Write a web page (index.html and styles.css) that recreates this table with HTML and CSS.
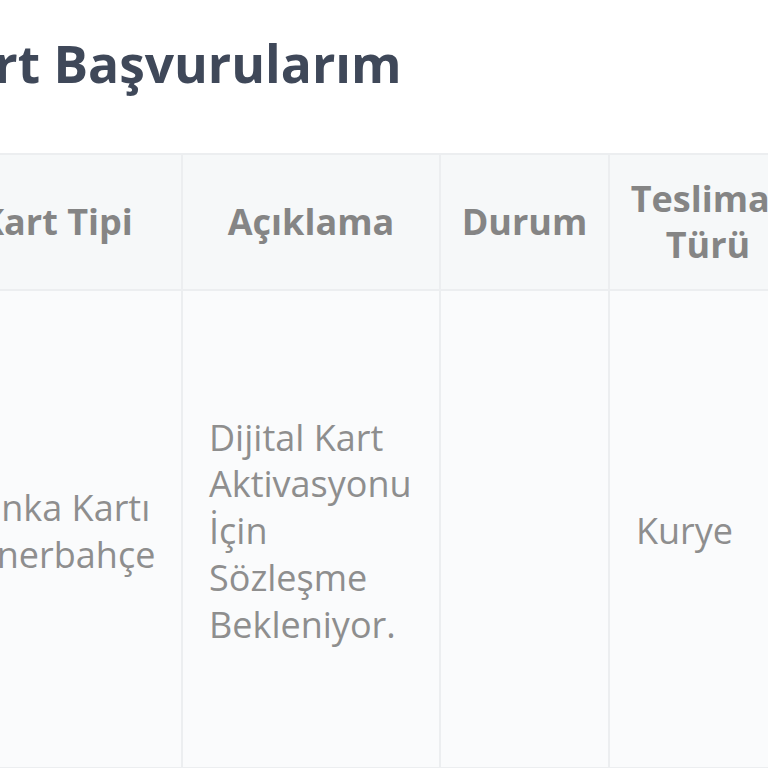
FILE: index.html
```html
<!DOCTYPE html>
<html lang="tr">
<head>
<meta charset="utf-8">
<title>Kart Başvurularım</title>
<link rel="stylesheet" href="styles.css">
</head>
<body>
<main class="page">
  <h1 class="title">Kart Başvurularım</h1>
  <table class="apps">
    <colgroup>
      <col class="c-type">
      <col class="c-desc">
      <col class="c-status">
      <col class="c-delivery">
    </colgroup>
    <thead>
      <tr>
        <th>Kart Tipi</th>
        <th>Açıklama</th>
        <th>Durum</th>
        <th>Teslimat Türü</th>
      </tr>
    </thead>
    <tbody>
      <tr>
        <td>Banka Kartı<br>Fenerbahçe</td>
        <td>Dijital Kart Aktivasyonu İçin Sözleşme Bekleniyor.</td>
        <td></td>
        <td>Kurye</td>
      </tr>
    </tbody>
  </table>
</main>
</body>
</html>
```

FILE: styles.css
```css
html, body {
  margin: 0;
  padding: 0;
  background: #ffffff;
  overflow: hidden;
}

.page {
  margin-left: -70px;
  width: 900px;
  font-family: "Open Sans", "Noto Sans", sans-serif;
}

.title {
  margin: 27px 0 54px -1px;
  font-size: 51.5px;
  line-height: 72px;
  font-weight: 700;
  color: #3f4859;
}

.apps {
  border-collapse: collapse;
  table-layout: fixed;
  width: 876px;
}

.c-type { width: 251px; }
.c-desc { width: 258px; }
.c-status { width: 169px; }
.c-delivery { width: 198px; }

.apps th,
.apps td {
  border: 2px solid #eceef0;
  vertical-align: middle;
}

.apps th {
  height: 134px;
  padding: 0 20px;
  background: #f6f8f9;
  color: #858585;
  font-size: 36px;
  line-height: 46px;
  font-weight: 700;
  text-align: center;
}

.apps td {
  height: 471px;
  padding: 5px 26px 0 26px;
  background: #fafbfc;
  color: #8e8e8e;
  font-size: 36px;
  line-height: 46.75px;
  font-weight: 400;
  text-align: left;
}
```
